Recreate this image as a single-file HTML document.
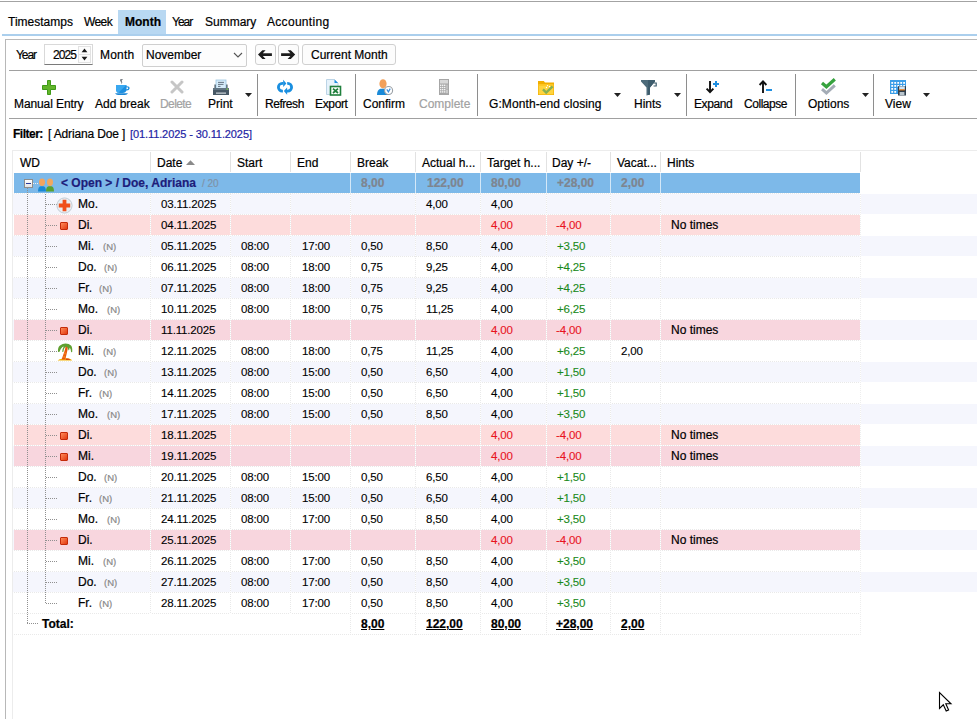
<!DOCTYPE html><html><head><meta charset="utf-8"><style>
*{margin:0;padding:0;box-sizing:border-box}
html,body{width:977px;height:719px;overflow:hidden;background:#fff}
body{position:relative;font-family:"Liberation Sans",sans-serif;font-size:12px;color:#000}
.t{position:absolute;white-space:pre;line-height:16px;font-size:12px;-webkit-text-stroke:0.2px currentColor}
.r{position:absolute}
.b{font-weight:bold}
.dis{color:#a2a2a2}
.num{letter-spacing:-0.15px;font-size:11.5px;-webkit-text-stroke:0.12px currentColor}
.red{color:#e8141e}
.grn{color:#1a8a1a}
.u{text-decoration:underline}
.nn{font-size:9.5px;color:#888888;line-height:14px}
.spin{border:1px solid #d9d9d9;border-bottom:1px solid #7a7a7a;background:#fff}
.sbtn{border:1px solid #e2e2e2;background:#fcfcfc}
.combo{border:1px solid #cfcfcf;background:#fdfdfd;border-radius:2px}
.btn{border:1px solid #d0d0d0;background:#fcfcfc;border-radius:3px}
.ebox{border:1px solid #8c8c8c;background:linear-gradient(#fff,#e4e4e4);width:9px!important;height:9px!important}
.sq{width:8px;height:8px;background:linear-gradient(135deg,#ff8a5a,#e23a10);border:1px solid #c42a08;border-radius:1px}
</style></head><body><div class="r" style="left:0px;top:1px;width:977px;height:1px;background:#a3a3a3"></div>
<div class="r" style="left:118px;top:10px;width:48px;height:24px;background:#b8d8f2"></div>
<div class="r" style="left:2px;top:34px;width:975px;height:2px;background:#abcfed"></div>
<div class="t " style="left:8px;top:14px;letter-spacing:0px">Timestamps</div>
<div class="t " style="left:84px;top:14px;letter-spacing:-0.6px">Week</div>
<div class="t b" style="left:125px;top:14px;letter-spacing:0px">Month</div>
<div class="t " style="left:172px;top:14px;letter-spacing:-1.0px">Year</div>
<div class="t " style="left:205px;top:14px;letter-spacing:0px">Summary</div>
<div class="t " style="left:267px;top:14px;letter-spacing:0.3px">Accounting</div>
<div class="r" style="left:5px;top:39px;width:972px;height:1px;background:#bababa"></div>
<div class="r" style="left:5px;top:39px;width:1px;height:680px;background:#b8b8b8"></div>
<div class="r" style="left:9px;top:70px;width:968px;height:1px;background:#a0a0a0"></div>
<div class="r" style="left:9px;top:118px;width:968px;height:1px;background:#a0a0a0"></div>
<div class="t " style="left:16px;top:47px;letter-spacing:-1.1px">Year</div>
<div class="r spin" style="left:44px;top:44px;width:49px;height:21px"></div>
<div class="t " style="left:53px;top:47px;letter-spacing:-0.9px">2025</div>
<div class="r sbtn" style="left:78px;top:46px;width:13px;height:9px"></div>
<div class="r sbtn" style="left:78px;top:54px;width:13px;height:9px"></div>
<svg class="r" style="left:78px;top:46px" width="13" height="17"><path d="M3.6 6.2 L6.5 2.6 L9.4 6.2Z M3.6 10.8 L6.5 14.4 L9.4 10.8Z" fill="#1a1a1a"/></svg>
<div class="t " style="left:100px;top:47px;letter-spacing:0.2px">Month</div>
<div class="r combo" style="left:142px;top:44px;width:105px;height:23px"></div>
<div class="t " style="left:146px;top:47px;">November</div>
<svg class="r" style="left:232px;top:51px" width="12" height="8"><path d="M2 2 L6 6 L10 2" fill="none" stroke="#555" stroke-width="1.1"/></svg>
<div class="r btn" style="left:255px;top:44px;width:21px;height:21px"></div>
<div class="r btn" style="left:278px;top:44px;width:21px;height:21px"></div>
<div class="r btn" style="left:302px;top:44px;width:94px;height:21px"></div>
<svg class="r" style="left:255px;top:44px" width="21" height="21"><path d="M3 10.6 L7.4 6.2 L10.6 6.2 L7.8 9.3 L16.9 9.3 L16.9 11.9 L7.8 11.9 L10.6 15 L7.4 15 Z" fill="#1c1c1c"/></svg>
<svg class="r" style="left:278px;top:44px" width="21" height="21"><path d="M17.2 10.6 L12.8 6.2 L9.6 6.2 L12.4 9.3 L3.1 9.3 L3.1 11.9 L12.4 11.9 L9.6 15 L12.8 15 Z" fill="#1c1c1c"/></svg>
<div class="t " style="left:311px;top:47px;">Current Month</div>
<div class="t " style="left:14px;top:96px;letter-spacing:-0.1px">Manual Entry</div>
<div class="t " style="left:95px;top:96px;letter-spacing:0px">Add break</div>
<div class="t dis" style="left:160px;top:96px;letter-spacing:-0.6px">Delete</div>
<div class="t " style="left:208px;top:96px;letter-spacing:0px">Print</div>
<div class="t " style="left:265px;top:96px;letter-spacing:-0.45px">Refresh</div>
<div class="t " style="left:315px;top:96px;letter-spacing:-0.35px">Export</div>
<div class="t " style="left:363px;top:96px;letter-spacing:0px">Confirm</div>
<div class="t dis" style="left:419px;top:96px;letter-spacing:0px">Complete</div>
<div class="t " style="left:489px;top:96px;letter-spacing:0.1px">G:Month-end closing</div>
<div class="t " style="left:634px;top:96px;letter-spacing:0px">Hints</div>
<div class="t " style="left:694px;top:96px;letter-spacing:-0.4px">Expand</div>
<div class="t " style="left:744px;top:96px;letter-spacing:-0.45px">Collapse</div>
<div class="t " style="left:808px;top:96px;letter-spacing:0px">Options</div>
<div class="t " style="left:885px;top:96px;letter-spacing:0px">View</div>
<div class="r" style="left:257px;top:74px;width:1px;height:42px;background:#8e8e8e"></div>
<div class="r" style="left:355px;top:74px;width:1px;height:42px;background:#8e8e8e"></div>
<div class="r" style="left:477px;top:74px;width:1px;height:42px;background:#8e8e8e"></div>
<div class="r" style="left:686px;top:74px;width:1px;height:42px;background:#8e8e8e"></div>
<div class="r" style="left:795px;top:74px;width:1px;height:42px;background:#8e8e8e"></div>
<div class="r" style="left:873px;top:74px;width:1px;height:42px;background:#8e8e8e"></div>
<svg class="r" style="left:245px;top:93px" width="8" height="5"><path d="M0 0 L7 0 L3.5 4Z" fill="#222"/></svg>
<svg class="r" style="left:614px;top:93px" width="8" height="5"><path d="M0 0 L7 0 L3.5 4Z" fill="#222"/></svg>
<svg class="r" style="left:674px;top:93px" width="8" height="5"><path d="M0 0 L7 0 L3.5 4Z" fill="#222"/></svg>
<svg class="r" style="left:862px;top:93px" width="8" height="5"><path d="M0 0 L7 0 L3.5 4Z" fill="#222"/></svg>
<svg class="r" style="left:923px;top:93px" width="8" height="5"><path d="M0 0 L7 0 L3.5 4Z" fill="#222"/></svg>
<svg class="r" style="left:41px;top:79px" width="17" height="17" viewBox="0 0 17 17"><path d="M6.5 1.5 H9.5 V6.5 H14.5 V10.5 H9.5 V15.5 H6.5 V10.5 H1.5 V6.5 H6.5Z" fill="#62b52a" stroke="#3f9a18" stroke-width="1"/></svg>
<svg class="r" style="left:114px;top:78px" width="18" height="18" viewBox="0 0 18 18"><path d="M6.2 1.2 Q8.5 0.6 9.2 1.6 Q7 2.2 8 3.6 Q9 5 7.2 6.2 Q7.8 4.6 6.6 3.6 Q5.6 2.4 6.2 1.2Z" fill="#7a8088"/><path d="M2 7 H12.5 V11 Q12.5 15 8.5 15 H6 Q2 15 2 11Z" fill="#1d8fe0"/><path d="M2 7 H12.5 L4 15 Q2 14 2 11Z" fill="#3aa8f0"/><path d="M12 8.2 Q15.8 7.8 15.6 10.4 Q15.2 13 11.6 12.4 L12 11.2 Q14.2 11.4 14.2 10.2 Q14.2 9 12 9.4Z" fill="#1d8fe0"/><path d="M1 15.2 H14 Q13 17 11 17 H4 Q2 17 1 15.2Z" fill="#1a86d6"/></svg>
<svg class="r" style="left:170px;top:80px" width="14" height="14" viewBox="0 0 14 14"><path d="M2 2 L12 12 M12 2 L2 12" stroke="#c6c6c6" stroke-width="3" stroke-linecap="round"/></svg>
<svg class="r" style="left:212px;top:79px" width="18" height="17" viewBox="0 0 18 17"><rect x="2.5" y="5.5" width="2" height="4" fill="#3a4650"/><rect x="13.5" y="5.5" width="2" height="4" fill="#3a4650"/><rect x="4" y="1" width="10" height="9" fill="#d6ecfa" stroke="#9cc6e2" stroke-width="0.8"/><path d="M6 3.4 H12 M6 5.4 H11.5 M6 7.4 H8.5" stroke="#5a6a78" stroke-width="0.9"/><path d="M1 9.5 Q1 9 2 9 H16 Q17 9 17 9.5 V16 H1Z" fill="#475865"/><rect x="1" y="9" width="16" height="2" fill="#627583"/><rect x="4" y="13.6" width="10" height="1" fill="#e8eef2"/><rect x="14.5" y="9.5" width="1.5" height="1.2" fill="#7cd040"/></svg>
<svg class="r" style="left:276px;top:79px" width="18" height="17" viewBox="0 0 18 17"><path d="M7.4 4.4 H6.25 A3.85 3.85 0 0 0 6.25 12.1 H6.9" fill="none" stroke="#1a8fe0" stroke-width="2.8"/><path d="M7.2 0.8 L10.4 4.4 L7.2 8Z" fill="#1a8fe0"/><path d="M11.2 4.4 H11.75 A3.85 3.85 0 0 1 11.75 12.1 H11" fill="none" stroke="#1a8fe0" stroke-width="2.8"/><path d="M11.1 8.5 L7.8 12.1 L11.1 15.7Z" fill="#1a8fe0"/></svg>
<svg class="r" style="left:325px;top:78px" width="17" height="18" viewBox="0 0 17 18"><path d="M1.5 1.5 H9.5 L13 5 V16.5 H1.5Z" fill="#e6f2fb" stroke="#bcd4e6" stroke-width="1"/><path d="M9.5 1.5 L13 5 H9.5Z" fill="#1e8ee0"/><rect x="5.5" y="8.5" width="10" height="8.5" fill="#fff" stroke="#1f7f3c" stroke-width="1.6"/><path d="M8 10.6 L13 15 M13 10.6 L8 15" stroke="#1f7f3c" stroke-width="1.7"/></svg>
<svg class="r" style="left:376px;top:78px" width="18" height="18" viewBox="0 0 18 18"><ellipse cx="7" cy="5.8" rx="3.6" ry="4.6" fill="#f2a05a"/><path d="M1 17 Q1 11.5 4.5 10.8 H9.5 Q11.5 11.2 12 13 V17Z" fill="#1a8ad8"/><circle cx="12.6" cy="12.5" r="4" fill="#fff" stroke="#9aa0a6" stroke-width="1.1"/><path d="M10.8 11.4 L12.4 13.8 L14.2 10.6" fill="none" stroke="#3a8ee0" stroke-width="1.2"/></svg>
<svg class="r" style="left:438px;top:78px" width="12" height="18" viewBox="0 0 12 18"><rect x="1" y="1" width="10" height="16" fill="#a6a6a6"/><rect x="2" y="2" width="8" height="3.5" fill="#d8d8d8"/><g fill="#f4f4f4"><rect x="2" y="6.6" width="1.4" height="1.4"/><rect x="4" y="6.6" width="1.4" height="1.4"/><rect x="6" y="6.6" width="1.4" height="1.4"/><rect x="2" y="8.8" width="1.4" height="1.4"/><rect x="4" y="8.8" width="1.4" height="1.4"/><rect x="6" y="8.8" width="1.4" height="1.4"/><rect x="2" y="11" width="1.4" height="1.4"/><rect x="4" y="11" width="1.4" height="1.4"/><rect x="6" y="11" width="1.4" height="1.4"/><rect x="2" y="13.2" width="1.4" height="1.4"/><rect x="4" y="13.2" width="1.4" height="1.4"/><rect x="6" y="13.2" width="1.4" height="1.4"/></g><rect x="8.2" y="6.6" width="1.6" height="5" fill="#c4c4c4"/><rect x="8.2" y="12" width="1.6" height="3.2" fill="#d4d4d4"/></svg>
<svg class="r" style="left:537px;top:80px" width="18" height="16" viewBox="0 0 18 16"><path d="M1 1 H6.8 L8 2.4 H17 V15 H1Z" fill="#f2ae00"/><path d="M1.6 4.4 H16.4 V14.4 H1.6Z" fill="#ffd43e"/><path d="M1.6 4.4 H16.4 V5.8 H1.6Z" fill="#ffc620"/><path d="M6 9.4 L9.2 12.6 L15.6 6.4" fill="none" stroke="#88b050" stroke-width="2.4"/><circle cx="10.5" cy="5.6" r="0.7" fill="#fff"/><circle cx="12.5" cy="6.5" r="0.7" fill="#fff"/><circle cx="9.5" cy="7.5" r="0.7" fill="#fff"/></svg>
<svg class="r" style="left:640px;top:79px" width="17" height="17" viewBox="0 0 17 17"><path d="M1 1 H15 V2.6 L10 8.5 V15.5 L6.5 16.5 V8.5 L1 2.6Z" fill="#4d6b7a"/><path d="M8 1 H15 V2.6 L10 8.5 V15.5 L8 16Z" fill="#3d5c6c"/><path d="M13.6 4 H16.2 V7 H13.6" fill="none" stroke="#3d5c6c" stroke-width="1.2"/></svg>
<svg class="r" style="left:704px;top:79px" width="17" height="16" viewBox="0 0 17 16"><path d="M6 2 V13" stroke="#111" stroke-width="1.9"/><path d="M2.6 9.6 L6 13.2 L9.4 9.6" fill="none" stroke="#111" stroke-width="1.9"/><path d="M12 2 V8 M9 5 H15" stroke="#1e8ee0" stroke-width="2"/></svg>
<svg class="r" style="left:757px;top:79px" width="17" height="16" viewBox="0 0 17 16"><path d="M6 2.2 V14" stroke="#111" stroke-width="1.9"/><path d="M2.6 6 L6 2.4 L9.4 6" fill="none" stroke="#111" stroke-width="1.9"/><path d="M9 11 H15" stroke="#1e8ee0" stroke-width="2"/></svg>
<svg class="r" style="left:820px;top:77px" width="17" height="18" viewBox="0 0 17 18"><path d="M2 12.2 L6.4 16 L14.8 8.4" fill="none" stroke="#a4acb6" stroke-width="3"/><path d="M2 6 L6.4 9.8 L14.8 2.2" fill="none" stroke="#36a23e" stroke-width="3.2"/></svg>
<svg class="r" style="left:889px;top:79px" width="18" height="17" viewBox="0 0 18 17"><rect x="1" y="1" width="16" height="14" fill="#3a9ee8"/><g fill="#fff"><rect x="2.3" y="3" width="1.8" height="1.8"/><rect x="5.3" y="3" width="1.8" height="1.8"/><rect x="8.3" y="3" width="1.8" height="1.8"/><rect x="11.3" y="3" width="1.8" height="1.8"/><rect x="14.2" y="3" width="1.8" height="1.8"/><rect x="2.3" y="6" width="1.8" height="1.8"/><rect x="5.3" y="6" width="1.8" height="1.8"/><rect x="8.3" y="6" width="1.8" height="1.8"/><rect x="11.3" y="6" width="1.8" height="1.8"/><rect x="14.2" y="6" width="1.8" height="1.8"/><rect x="2.3" y="9" width="1.8" height="1.8"/><rect x="5.3" y="9" width="1.8" height="1.8"/><rect x="2.3" y="12" width="1.8" height="1.8"/><rect x="5.3" y="12" width="1.8" height="1.8"/></g><rect x="9" y="7.2" width="8" height="9.3" fill="#2e3e4c"/><rect x="10.2" y="7.4" width="5.6" height="3.6" fill="#cfe6f6"/><rect x="10.2" y="10.2" width="5.6" height="1.2" fill="#f07a10"/><rect x="10.6" y="13" width="4.8" height="3.2" fill="#b8c4cc"/></svg>

<div class="t b" style="left:13px;top:126px;letter-spacing:-0.5px">Filter:</div>
<div class="t " style="left:48px;top:126px;letter-spacing:-0.15px">[ Adriana Doe ]</div>
<div class="t" style="left:130px;top:126px;font-size:11px;color:#1e24a4;letter-spacing:-0.1px">[01.11.2025 - 30.11.2025]</div>
<div class="r" style="left:12px;top:150px;width:965px;height:1px;background:#ececec"></div>
<div class="r" style="left:12px;top:150px;width:1px;height:569px;background:#ececec"></div>
<div class="r" style="left:150px;top:152px;width:1px;height:20px;background:#e2e2e2"></div>
<div class="r" style="left:230px;top:152px;width:1px;height:20px;background:#e2e2e2"></div>
<div class="r" style="left:290px;top:152px;width:1px;height:20px;background:#e2e2e2"></div>
<div class="r" style="left:350px;top:152px;width:1px;height:20px;background:#e2e2e2"></div>
<div class="r" style="left:415px;top:152px;width:1px;height:20px;background:#e2e2e2"></div>
<div class="r" style="left:480px;top:152px;width:1px;height:20px;background:#e2e2e2"></div>
<div class="r" style="left:546px;top:152px;width:1px;height:20px;background:#e2e2e2"></div>
<div class="r" style="left:610px;top:152px;width:1px;height:20px;background:#e2e2e2"></div>
<div class="r" style="left:660px;top:152px;width:1px;height:20px;background:#e2e2e2"></div>
<div class="r" style="left:860px;top:152px;width:1px;height:20px;background:#e2e2e2"></div>
<div class="t " style="left:20px;top:155px;">WD</div>
<div class="t " style="left:157px;top:155px;">Date</div>
<div class="t " style="left:237px;top:155px;">Start</div>
<div class="t " style="left:297px;top:155px;">End</div>
<div class="t " style="left:357px;top:155px;">Break</div>
<div class="t " style="left:422px;top:155px;">Actual h...</div>
<div class="t " style="left:487px;top:155px;">Target h...</div>
<div class="t " style="left:552px;top:155px;">Day +/-</div>
<div class="t " style="left:617px;top:155px;">Vacat...</div>
<div class="t " style="left:667px;top:155px;">Hints</div>
<svg class="r" style="left:186px;top:160px" width="10" height="6"><path d="M0 5 L4.5 0.2 L9 5Z" fill="#8a8a8a"/></svg>
<div class="r" style="left:14px;top:173px;width:846px;height:20px;background:#7db9e9"></div>
<div class="r" style="left:13px;top:194px;width:964px;height:20px;background:#f5f6fd"></div>
<div class="r" style="left:13px;top:236px;width:964px;height:20px;background:#f5f6fd"></div>
<div class="r" style="left:13px;top:278px;width:964px;height:20px;background:#f5f6fd"></div>
<div class="r" style="left:13px;top:320px;width:964px;height:20px;background:#f5f6fd"></div>
<div class="r" style="left:13px;top:362px;width:964px;height:20px;background:#f5f6fd"></div>
<div class="r" style="left:13px;top:404px;width:964px;height:20px;background:#f5f6fd"></div>
<div class="r" style="left:13px;top:446px;width:964px;height:20px;background:#f5f6fd"></div>
<div class="r" style="left:13px;top:488px;width:964px;height:20px;background:#f5f6fd"></div>
<div class="r" style="left:13px;top:530px;width:964px;height:20px;background:#f5f6fd"></div>
<div class="r" style="left:13px;top:572px;width:964px;height:20px;background:#f5f6fd"></div>
<div class="r" style="left:14px;top:215px;width:846px;height:20px;background:#fddcdc"></div>
<div class="r" style="left:14px;top:320px;width:846px;height:20px;background:#f8d6de"></div>
<div class="r" style="left:14px;top:425px;width:846px;height:20px;background:#fddcdc"></div>
<div class="r" style="left:14px;top:446px;width:846px;height:20px;background:#f8d6de"></div>
<div class="r" style="left:14px;top:530px;width:846px;height:20px;background:#f8d6de"></div>
<div class="r" style="left:14px;top:193px;width:846px;height:1px;background:repeating-linear-gradient(90deg,#e9e9e9 0 1px,#fff 1px 2px)"></div>
<div class="r" style="left:14px;top:214px;width:846px;height:1px;background:repeating-linear-gradient(90deg,#e9e9e9 0 1px,#fff 1px 2px)"></div>
<div class="r" style="left:14px;top:235px;width:846px;height:1px;background:repeating-linear-gradient(90deg,#e9e9e9 0 1px,#fff 1px 2px)"></div>
<div class="r" style="left:14px;top:256px;width:846px;height:1px;background:repeating-linear-gradient(90deg,#e9e9e9 0 1px,#fff 1px 2px)"></div>
<div class="r" style="left:14px;top:277px;width:846px;height:1px;background:repeating-linear-gradient(90deg,#e9e9e9 0 1px,#fff 1px 2px)"></div>
<div class="r" style="left:14px;top:298px;width:846px;height:1px;background:repeating-linear-gradient(90deg,#e9e9e9 0 1px,#fff 1px 2px)"></div>
<div class="r" style="left:14px;top:319px;width:846px;height:1px;background:repeating-linear-gradient(90deg,#e9e9e9 0 1px,#fff 1px 2px)"></div>
<div class="r" style="left:14px;top:340px;width:846px;height:1px;background:repeating-linear-gradient(90deg,#e9e9e9 0 1px,#fff 1px 2px)"></div>
<div class="r" style="left:14px;top:361px;width:846px;height:1px;background:repeating-linear-gradient(90deg,#e9e9e9 0 1px,#fff 1px 2px)"></div>
<div class="r" style="left:14px;top:382px;width:846px;height:1px;background:repeating-linear-gradient(90deg,#e9e9e9 0 1px,#fff 1px 2px)"></div>
<div class="r" style="left:14px;top:403px;width:846px;height:1px;background:repeating-linear-gradient(90deg,#e9e9e9 0 1px,#fff 1px 2px)"></div>
<div class="r" style="left:14px;top:424px;width:846px;height:1px;background:repeating-linear-gradient(90deg,#e9e9e9 0 1px,#fff 1px 2px)"></div>
<div class="r" style="left:14px;top:445px;width:846px;height:1px;background:repeating-linear-gradient(90deg,#e9e9e9 0 1px,#fff 1px 2px)"></div>
<div class="r" style="left:14px;top:466px;width:846px;height:1px;background:repeating-linear-gradient(90deg,#e9e9e9 0 1px,#fff 1px 2px)"></div>
<div class="r" style="left:14px;top:487px;width:846px;height:1px;background:repeating-linear-gradient(90deg,#e9e9e9 0 1px,#fff 1px 2px)"></div>
<div class="r" style="left:14px;top:508px;width:846px;height:1px;background:repeating-linear-gradient(90deg,#e9e9e9 0 1px,#fff 1px 2px)"></div>
<div class="r" style="left:14px;top:529px;width:846px;height:1px;background:repeating-linear-gradient(90deg,#e9e9e9 0 1px,#fff 1px 2px)"></div>
<div class="r" style="left:14px;top:550px;width:846px;height:1px;background:repeating-linear-gradient(90deg,#e9e9e9 0 1px,#fff 1px 2px)"></div>
<div class="r" style="left:14px;top:571px;width:846px;height:1px;background:repeating-linear-gradient(90deg,#e9e9e9 0 1px,#fff 1px 2px)"></div>
<div class="r" style="left:14px;top:592px;width:846px;height:1px;background:repeating-linear-gradient(90deg,#e9e9e9 0 1px,#fff 1px 2px)"></div>
<div class="r" style="left:14px;top:613px;width:846px;height:1px;background:repeating-linear-gradient(90deg,#e9e9e9 0 1px,#fff 1px 2px)"></div>
<div class="r" style="left:14px;top:634px;width:846px;height:1px;background:repeating-linear-gradient(90deg,#e9e9e9 0 1px,#fff 1px 2px)"></div>
<div class="r" style="left:150px;top:194px;width:1px;height:420px;background:repeating-linear-gradient(180deg,#e9e9e9 0 1px,#fff 1px 2px)"></div>
<div class="r" style="left:230px;top:194px;width:1px;height:420px;background:repeating-linear-gradient(180deg,#e9e9e9 0 1px,#fff 1px 2px)"></div>
<div class="r" style="left:290px;top:194px;width:1px;height:420px;background:repeating-linear-gradient(180deg,#e9e9e9 0 1px,#fff 1px 2px)"></div>
<div class="r" style="left:350px;top:194px;width:1px;height:441px;background:repeating-linear-gradient(180deg,#e9e9e9 0 1px,#fff 1px 2px)"></div>
<div class="r" style="left:415px;top:194px;width:1px;height:441px;background:repeating-linear-gradient(180deg,#e9e9e9 0 1px,#fff 1px 2px)"></div>
<div class="r" style="left:480px;top:194px;width:1px;height:441px;background:repeating-linear-gradient(180deg,#e9e9e9 0 1px,#fff 1px 2px)"></div>
<div class="r" style="left:546px;top:194px;width:1px;height:441px;background:repeating-linear-gradient(180deg,#e9e9e9 0 1px,#fff 1px 2px)"></div>
<div class="r" style="left:610px;top:194px;width:1px;height:441px;background:repeating-linear-gradient(180deg,#e9e9e9 0 1px,#fff 1px 2px)"></div>
<div class="r" style="left:660px;top:194px;width:1px;height:441px;background:repeating-linear-gradient(180deg,#e9e9e9 0 1px,#fff 1px 2px)"></div>
<div class="r" style="left:860px;top:194px;width:1px;height:441px;background:repeating-linear-gradient(180deg,#eeeeee 0 1px,#fff 1px 2px)"></div>
<div class="r" style="left:350px;top:173px;width:1px;height:20px;background:#d4e8f8"></div>
<div class="r" style="left:415px;top:173px;width:1px;height:20px;background:#d4e8f8"></div>
<div class="r" style="left:480px;top:173px;width:1px;height:20px;background:#d4e8f8"></div>
<div class="r" style="left:546px;top:173px;width:1px;height:20px;background:#d4e8f8"></div>
<div class="r" style="left:610px;top:173px;width:1px;height:20px;background:#d4e8f8"></div>
<div class="r" style="left:660px;top:173px;width:1px;height:20px;background:#d4e8f8"></div>
<div class="r" style="left:27px;top:188px;width:1px;height:436px;background:repeating-linear-gradient(180deg,#909090 0 1px,transparent 1px 2px)"></div>
<div class="r" style="left:45px;top:194px;width:1px;height:409px;background:repeating-linear-gradient(180deg,#909090 0 1px,transparent 1px 2px)"></div>
<div class="r" style="left:33px;top:183px;width:5px;height:1px;background:repeating-linear-gradient(90deg,#f0f0f0 0 1px,transparent 1px 2px)"></div>
<div class="r" style="left:27px;top:623px;width:12px;height:1px;background:repeating-linear-gradient(90deg,#909090 0 1px,transparent 1px 2px)"></div>
<div class="r" style="left:46px;top:204px;width:11px;height:1px;background:repeating-linear-gradient(90deg,#909090 0 1px,transparent 1px 2px)"></div>
<div class="r" style="left:46px;top:225px;width:11px;height:1px;background:repeating-linear-gradient(90deg,#909090 0 1px,transparent 1px 2px)"></div>
<div class="r" style="left:46px;top:246px;width:11px;height:1px;background:repeating-linear-gradient(90deg,#909090 0 1px,transparent 1px 2px)"></div>
<div class="r" style="left:46px;top:267px;width:11px;height:1px;background:repeating-linear-gradient(90deg,#909090 0 1px,transparent 1px 2px)"></div>
<div class="r" style="left:46px;top:288px;width:11px;height:1px;background:repeating-linear-gradient(90deg,#909090 0 1px,transparent 1px 2px)"></div>
<div class="r" style="left:46px;top:309px;width:11px;height:1px;background:repeating-linear-gradient(90deg,#909090 0 1px,transparent 1px 2px)"></div>
<div class="r" style="left:46px;top:330px;width:11px;height:1px;background:repeating-linear-gradient(90deg,#909090 0 1px,transparent 1px 2px)"></div>
<div class="r" style="left:46px;top:351px;width:11px;height:1px;background:repeating-linear-gradient(90deg,#909090 0 1px,transparent 1px 2px)"></div>
<div class="r" style="left:46px;top:372px;width:11px;height:1px;background:repeating-linear-gradient(90deg,#909090 0 1px,transparent 1px 2px)"></div>
<div class="r" style="left:46px;top:393px;width:11px;height:1px;background:repeating-linear-gradient(90deg,#909090 0 1px,transparent 1px 2px)"></div>
<div class="r" style="left:46px;top:414px;width:11px;height:1px;background:repeating-linear-gradient(90deg,#909090 0 1px,transparent 1px 2px)"></div>
<div class="r" style="left:46px;top:435px;width:11px;height:1px;background:repeating-linear-gradient(90deg,#909090 0 1px,transparent 1px 2px)"></div>
<div class="r" style="left:46px;top:456px;width:11px;height:1px;background:repeating-linear-gradient(90deg,#909090 0 1px,transparent 1px 2px)"></div>
<div class="r" style="left:46px;top:477px;width:11px;height:1px;background:repeating-linear-gradient(90deg,#909090 0 1px,transparent 1px 2px)"></div>
<div class="r" style="left:46px;top:498px;width:11px;height:1px;background:repeating-linear-gradient(90deg,#909090 0 1px,transparent 1px 2px)"></div>
<div class="r" style="left:46px;top:519px;width:11px;height:1px;background:repeating-linear-gradient(90deg,#909090 0 1px,transparent 1px 2px)"></div>
<div class="r" style="left:46px;top:540px;width:11px;height:1px;background:repeating-linear-gradient(90deg,#909090 0 1px,transparent 1px 2px)"></div>
<div class="r" style="left:46px;top:561px;width:11px;height:1px;background:repeating-linear-gradient(90deg,#909090 0 1px,transparent 1px 2px)"></div>
<div class="r" style="left:46px;top:582px;width:11px;height:1px;background:repeating-linear-gradient(90deg,#909090 0 1px,transparent 1px 2px)"></div>
<div class="r" style="left:46px;top:603px;width:11px;height:1px;background:repeating-linear-gradient(90deg,#909090 0 1px,transparent 1px 2px)"></div>
<svg class="r" style="left:37px;top:178px" width="18" height="14" viewBox="0 0 18 14"><ellipse cx="13" cy="4.3" rx="3" ry="3.7" fill="#f0a860"/><path d="M9 13.5 Q9 8.6 11.6 8.2 H14.4 Q17 8.6 17 13.5Z" fill="#58a030"/><ellipse cx="5" cy="4.3" rx="3" ry="3.7" fill="#f2a460"/><path d="M1 13.5 Q1 8.6 3.6 8.2 H6.4 Q9 8.6 9 13.5Z" fill="#1a88d4"/></svg>

<div class="r ebox" style="left:24px;top:179px;width:7px;height:7px"></div>
<div class="r" style="left:26px;top:183px;width:5px;height:1px;background:#2a3a9a"></div>
<div class="t b" style="left:61px;top:175px;color:#1d1d7a">&lt; Open &gt; / Doe, Adriana</div>
<div class="t" style="left:202px;top:176px;font-size:10px;color:#7f93a8">/ 20</div>
<div class="t b" style="left:361px;top:175px;color:#7d8590">8,00</div>
<div class="t b" style="left:427px;top:175px;color:#7d8590">122,00</div>
<div class="t b" style="left:491px;top:175px;color:#7d8590">80,00</div>
<div class="t b" style="left:557px;top:175px;color:#7d8590">+28,00</div>
<div class="t b" style="left:621px;top:175px;color:#7d8590">2,00</div>
<div class="t " style="left:78px;top:196px;">Mo.</div>
<div class="t num" style="left:161px;top:196px;">03.11.2025</div>
<div class="t num" style="left:426px;top:196px;">4,00</div>
<div class="t num" style="left:491px;top:196px;">4,00</div>
<svg class="r" style="left:56px;top:197px" width="17" height="17"><circle cx="8.5" cy="8.5" r="7.6" fill="#e9eef3" stroke="#c3ccd4" stroke-width="1"/><path d="M6.6 2.8 H10.4 V6.6 H14.2 V10.4 H10.4 V14.2 H6.6 V10.4 H2.8 V6.6 H6.6Z" fill="#f0501c"/></svg>
<div class="t " style="left:78px;top:217px;">Di.</div>
<div class="t num" style="left:161px;top:217px;">04.11.2025</div>
<div class="t num red" style="left:491px;top:217px;">4,00</div>
<div class="t num red" style="left:556px;top:217px;">-4,00</div>
<div class="t " style="left:671px;top:217px;">No times</div>
<div class="r sq" style="left:60px;top:222px"></div>
<div class="t " style="left:78px;top:238px;">Mi.</div>
<div class="t nn" style="left:103px;top:240px">(N)</div>
<div class="t num" style="left:161px;top:238px;">05.11.2025</div>
<div class="t num" style="left:241px;top:238px;">08:00</div>
<div class="t num" style="left:302px;top:238px;">17:00</div>
<div class="t num" style="left:361px;top:238px;">0,50</div>
<div class="t num" style="left:426px;top:238px;">8,50</div>
<div class="t num" style="left:491px;top:238px;">4,00</div>
<div class="t num grn" style="left:557px;top:238px;">+3,50</div>
<div class="t " style="left:78px;top:259px;">Do.</div>
<div class="t nn" style="left:104px;top:261px">(N)</div>
<div class="t num" style="left:161px;top:259px;">06.11.2025</div>
<div class="t num" style="left:241px;top:259px;">08:00</div>
<div class="t num" style="left:302px;top:259px;">18:00</div>
<div class="t num" style="left:361px;top:259px;">0,75</div>
<div class="t num" style="left:426px;top:259px;">9,25</div>
<div class="t num" style="left:491px;top:259px;">4,00</div>
<div class="t num grn" style="left:557px;top:259px;">+4,25</div>
<div class="t " style="left:78px;top:280px;">Fr.</div>
<div class="t nn" style="left:99px;top:282px">(N)</div>
<div class="t num" style="left:161px;top:280px;">07.11.2025</div>
<div class="t num" style="left:241px;top:280px;">08:00</div>
<div class="t num" style="left:302px;top:280px;">18:00</div>
<div class="t num" style="left:361px;top:280px;">0,75</div>
<div class="t num" style="left:426px;top:280px;">9,25</div>
<div class="t num" style="left:491px;top:280px;">4,00</div>
<div class="t num grn" style="left:557px;top:280px;">+4,25</div>
<div class="t " style="left:78px;top:301px;">Mo.</div>
<div class="t nn" style="left:107px;top:303px">(N)</div>
<div class="t num" style="left:161px;top:301px;">10.11.2025</div>
<div class="t num" style="left:241px;top:301px;">08:00</div>
<div class="t num" style="left:302px;top:301px;">18:00</div>
<div class="t num" style="left:361px;top:301px;">0,75</div>
<div class="t num" style="left:426px;top:301px;">11,25</div>
<div class="t num" style="left:491px;top:301px;">4,00</div>
<div class="t num grn" style="left:557px;top:301px;">+6,25</div>
<div class="t " style="left:78px;top:322px;">Di.</div>
<div class="t num" style="left:161px;top:322px;">11.11.2025</div>
<div class="t num red" style="left:491px;top:322px;">4,00</div>
<div class="t num red" style="left:556px;top:322px;">-4,00</div>
<div class="t " style="left:671px;top:322px;">No times</div>
<div class="r sq" style="left:60px;top:327px"></div>
<div class="t " style="left:78px;top:343px;">Mi.</div>
<div class="t nn" style="left:103px;top:345px">(N)</div>
<div class="t num" style="left:161px;top:343px;">12.11.2025</div>
<div class="t num" style="left:241px;top:343px;">08:00</div>
<div class="t num" style="left:302px;top:343px;">18:00</div>
<div class="t num" style="left:361px;top:343px;">0,75</div>
<div class="t num" style="left:426px;top:343px;">11,25</div>
<div class="t num" style="left:491px;top:343px;">4,00</div>
<div class="t num grn" style="left:557px;top:343px;">+6,25</div>
<div class="t num" style="left:621px;top:343px;">2,00</div>
<svg class="r" style="left:57px;top:343px" width="16" height="18" viewBox="0 0 16 18"><path d="M0.5 17.5 Q2 15.6 6 15.4 L10 15.2 Q14 15.4 15 17.5Z" fill="#f2b000"/><path d="M9 15.5 Q12 15 13.5 16.8 L9 17Z" fill="#d83a10"/><path d="M8.6 2.5 L11 2.8 Q10.6 8 9.6 11 Q8.8 14 8.4 16.5 L4.6 16.5 Q6.2 12 7.4 8.5 Q8.4 5.5 8.6 2.5Z" fill="#e8580c"/><path d="M7.6 9 L9.4 9.4 L8.8 11.6 L6.8 11.2Z M6.6 12.6 L8.4 13 L8 15 L5.8 14.6Z" fill="#f07a1a"/><path d="M1 9 Q0.6 4 3 2.4 Q5.5 0.6 8.5 0.6 Q12 0.6 14 2.4 Q15.6 4 15.2 9 L14.2 9.2 Q13.8 6 12.6 4.6 Q12.6 7 11.6 7.6 Q11 4.4 9.6 3.4 Q7 3.6 6.4 8.8 L5.2 9 Q5.4 5.2 6.8 3.4 Q4 4 2.6 8.8Z" fill="#5fa030"/></svg>
<div class="t " style="left:78px;top:364px;">Do.</div>
<div class="t nn" style="left:104px;top:366px">(N)</div>
<div class="t num" style="left:161px;top:364px;">13.11.2025</div>
<div class="t num" style="left:241px;top:364px;">08:00</div>
<div class="t num" style="left:302px;top:364px;">15:00</div>
<div class="t num" style="left:361px;top:364px;">0,50</div>
<div class="t num" style="left:426px;top:364px;">6,50</div>
<div class="t num" style="left:491px;top:364px;">4,00</div>
<div class="t num grn" style="left:557px;top:364px;">+1,50</div>
<div class="t " style="left:78px;top:385px;">Fr.</div>
<div class="t nn" style="left:99px;top:387px">(N)</div>
<div class="t num" style="left:161px;top:385px;">14.11.2025</div>
<div class="t num" style="left:241px;top:385px;">08:00</div>
<div class="t num" style="left:302px;top:385px;">15:00</div>
<div class="t num" style="left:361px;top:385px;">0,50</div>
<div class="t num" style="left:426px;top:385px;">6,50</div>
<div class="t num" style="left:491px;top:385px;">4,00</div>
<div class="t num grn" style="left:557px;top:385px;">+1,50</div>
<div class="t " style="left:78px;top:406px;">Mo.</div>
<div class="t nn" style="left:107px;top:408px">(N)</div>
<div class="t num" style="left:161px;top:406px;">17.11.2025</div>
<div class="t num" style="left:241px;top:406px;">08:00</div>
<div class="t num" style="left:302px;top:406px;">15:00</div>
<div class="t num" style="left:361px;top:406px;">0,50</div>
<div class="t num" style="left:426px;top:406px;">8,50</div>
<div class="t num" style="left:491px;top:406px;">4,00</div>
<div class="t num grn" style="left:557px;top:406px;">+3,50</div>
<div class="t " style="left:78px;top:427px;">Di.</div>
<div class="t num" style="left:161px;top:427px;">18.11.2025</div>
<div class="t num red" style="left:491px;top:427px;">4,00</div>
<div class="t num red" style="left:556px;top:427px;">-4,00</div>
<div class="t " style="left:671px;top:427px;">No times</div>
<div class="r sq" style="left:60px;top:432px"></div>
<div class="t " style="left:78px;top:448px;">Mi.</div>
<div class="t num" style="left:161px;top:448px;">19.11.2025</div>
<div class="t num red" style="left:491px;top:448px;">4,00</div>
<div class="t num red" style="left:556px;top:448px;">-4,00</div>
<div class="t " style="left:671px;top:448px;">No times</div>
<div class="r sq" style="left:60px;top:453px"></div>
<div class="t " style="left:78px;top:469px;">Do.</div>
<div class="t nn" style="left:104px;top:471px">(N)</div>
<div class="t num" style="left:161px;top:469px;">20.11.2025</div>
<div class="t num" style="left:241px;top:469px;">08:00</div>
<div class="t num" style="left:302px;top:469px;">15:00</div>
<div class="t num" style="left:361px;top:469px;">0,50</div>
<div class="t num" style="left:426px;top:469px;">6,50</div>
<div class="t num" style="left:491px;top:469px;">4,00</div>
<div class="t num grn" style="left:557px;top:469px;">+1,50</div>
<div class="t " style="left:78px;top:490px;">Fr.</div>
<div class="t nn" style="left:99px;top:492px">(N)</div>
<div class="t num" style="left:161px;top:490px;">21.11.2025</div>
<div class="t num" style="left:241px;top:490px;">08:00</div>
<div class="t num" style="left:302px;top:490px;">15:00</div>
<div class="t num" style="left:361px;top:490px;">0,50</div>
<div class="t num" style="left:426px;top:490px;">6,50</div>
<div class="t num" style="left:491px;top:490px;">4,00</div>
<div class="t num grn" style="left:557px;top:490px;">+1,50</div>
<div class="t " style="left:78px;top:511px;">Mo.</div>
<div class="t nn" style="left:107px;top:513px">(N)</div>
<div class="t num" style="left:161px;top:511px;">24.11.2025</div>
<div class="t num" style="left:241px;top:511px;">08:00</div>
<div class="t num" style="left:302px;top:511px;">17:00</div>
<div class="t num" style="left:361px;top:511px;">0,50</div>
<div class="t num" style="left:426px;top:511px;">8,50</div>
<div class="t num" style="left:491px;top:511px;">4,00</div>
<div class="t num grn" style="left:557px;top:511px;">+3,50</div>
<div class="t " style="left:78px;top:532px;">Di.</div>
<div class="t num" style="left:161px;top:532px;">25.11.2025</div>
<div class="t num red" style="left:491px;top:532px;">4,00</div>
<div class="t num red" style="left:556px;top:532px;">-4,00</div>
<div class="t " style="left:671px;top:532px;">No times</div>
<div class="r sq" style="left:60px;top:537px"></div>
<div class="t " style="left:78px;top:553px;">Mi.</div>
<div class="t nn" style="left:103px;top:555px">(N)</div>
<div class="t num" style="left:161px;top:553px;">26.11.2025</div>
<div class="t num" style="left:241px;top:553px;">08:00</div>
<div class="t num" style="left:302px;top:553px;">17:00</div>
<div class="t num" style="left:361px;top:553px;">0,50</div>
<div class="t num" style="left:426px;top:553px;">8,50</div>
<div class="t num" style="left:491px;top:553px;">4,00</div>
<div class="t num grn" style="left:557px;top:553px;">+3,50</div>
<div class="t " style="left:78px;top:574px;">Do.</div>
<div class="t nn" style="left:104px;top:576px">(N)</div>
<div class="t num" style="left:161px;top:574px;">27.11.2025</div>
<div class="t num" style="left:241px;top:574px;">08:00</div>
<div class="t num" style="left:302px;top:574px;">17:00</div>
<div class="t num" style="left:361px;top:574px;">0,50</div>
<div class="t num" style="left:426px;top:574px;">8,50</div>
<div class="t num" style="left:491px;top:574px;">4,00</div>
<div class="t num grn" style="left:557px;top:574px;">+3,50</div>
<div class="t " style="left:78px;top:595px;">Fr.</div>
<div class="t nn" style="left:99px;top:597px">(N)</div>
<div class="t num" style="left:161px;top:595px;">28.11.2025</div>
<div class="t num" style="left:241px;top:595px;">08:00</div>
<div class="t num" style="left:302px;top:595px;">17:00</div>
<div class="t num" style="left:361px;top:595px;">0,50</div>
<div class="t num" style="left:426px;top:595px;">8,50</div>
<div class="t num" style="left:491px;top:595px;">4,00</div>
<div class="t num grn" style="left:557px;top:595px;">+3,50</div>
<div class="t b" style="left:42px;top:616px">Total:</div>
<div class="t b u" style="left:361px;top:616px">8,00</div>
<div class="t b u" style="left:426px;top:616px">122,00</div>
<div class="t b u" style="left:491px;top:616px">80,00</div>
<div class="t b u" style="left:556px;top:616px">+28,00</div>
<div class="t b u" style="left:621px;top:616px">2,00</div>
<svg class="r" style="left:938px;top:691px" width="16" height="22"><path d="M1.5 1.5 L1.5 17.5 L5.3 13.8 L8.2 20 L10.6 19 L7.8 12.8 L13 12.8 Z" fill="#fff" stroke="#000" stroke-width="1.1" stroke-linejoin="miter"/></svg></body></html>
